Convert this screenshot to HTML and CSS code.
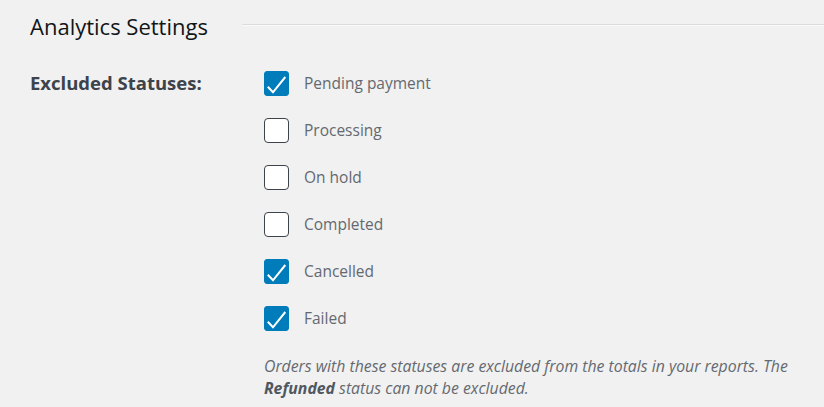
FILE: index.html
```html
<!DOCTYPE html>
<html lang="en">
<head>
    <meta charset="UTF-8">
    <meta name="viewport" content="width=device-width, initial-scale=1.0">
    <title>Analytics Settings</title>
    <link rel="stylesheet" href="styles.css">
</head>
<body>
    <div id="settings">
        <div class="section-header">
            <h2>Analytics Settings</h2>
            <div class="header-line"></div>
        </div>

        <div class="field-row">
            <div class="field-label">Excluded Statuses:</div>
            <div class="field-control">
                <ul class="status-list">
                    <li class="status-item">
                        <span class="checkbox checked">
                            <svg viewBox="0 0 25 25"><polyline points="3.8,15.8 9,21.3 21.3,6" /></svg>
                        </span>
                        <span class="status-name">Pending payment</span>
                    </li>
                    <li class="status-item">
                        <span class="checkbox"></span>
                        <span class="status-name">Processing</span>
                    </li>
                    <li class="status-item">
                        <span class="checkbox"></span>
                        <span class="status-name">On hold</span>
                    </li>
                    <li class="status-item">
                        <span class="checkbox"></span>
                        <span class="status-name">Completed</span>
                    </li>
                    <li class="status-item">
                        <span class="checkbox checked">
                            <svg viewBox="0 0 25 25"><polyline points="3.8,15.8 9,21.3 21.3,6" /></svg>
                        </span>
                        <span class="status-name">Cancelled</span>
                    </li>
                    <li class="status-item">
                        <span class="checkbox checked">
                            <svg viewBox="0 0 25 25"><polyline points="3.8,15.8 9,21.3 21.3,6" /></svg>
                        </span>
                        <span class="status-name">Failed</span>
                    </li>
                </ul>
                <p class="description">
                    Orders with these statuses are excluded from the totals in your reports. The
                    <strong>Refunded</strong> status can not be excluded.
                </p>
            </div>
        </div>
    </div>
</body>
</html>
```

FILE: styles.css
```css
*, *::before, *::after {
    box-sizing: border-box;
}

body {
    font-family: "Open Sans", "Noto Sans", sans-serif;
    background-color: #f1f1f1;
    margin: 0;
    padding: 0 0 0 30px;
    color: #1d2327;
}

/* Cabecera de la sección */
.section-header {
    display: flex;
    align-items: center;
    gap: 34px;
    height: 52px;
}
.section-header h2 {
    margin: 0;
    font-size: 22px;
    font-weight: 400;
    color: #101517;
    white-space: nowrap;
}
.header-line {
    flex: 1;
    height: 2px;
    border-top: 1px solid #dcdcde;
    border-bottom: 1px solid #fafafa;
    margin-top: -2px;
}

/* Fila del formulario */
.field-row {
    display: flex;
    margin-top: 19px;
}
.field-label {
    width: 234px;
    font-size: 18.5px;
    font-weight: 700;
    color: #3c434a;
    line-height: 25px;
    margin-top: -1px;
}

.status-list {
    list-style: none;
    margin: 0;
    padding: 0;
    display: flex;
    flex-direction: column;
    gap: 22px;
}
.status-item {
    display: flex;
    align-items: center;
    gap: 15px;
    height: 25px;
}
.checkbox {
    width: 25px;
    height: 25px;
    border: 1px solid #3c434a;
    border-radius: 4px;
    background-color: #fff;
    display: flex;
}
.checkbox.checked {
    background-color: #007cba;
    border-color: #007cba;
    border-radius: 3px;
}
.checkbox svg {
    margin: -1px;
    width: 25px;
    height: 25px;
}
.checkbox polyline {
    fill: none;
    stroke: #fff;
    stroke-width: 2;
}
.status-name {
    font-size: 15.5px;
    color: #646970;
    margin-top: -2px;
}

.description {
    margin: 24px 0 0;
    font-size: 15.8px;
    font-style: italic;
    line-height: 22px;
    color: #646970;
    max-width: 545px;
}
.description strong {
    color: #50575e;
}
```
